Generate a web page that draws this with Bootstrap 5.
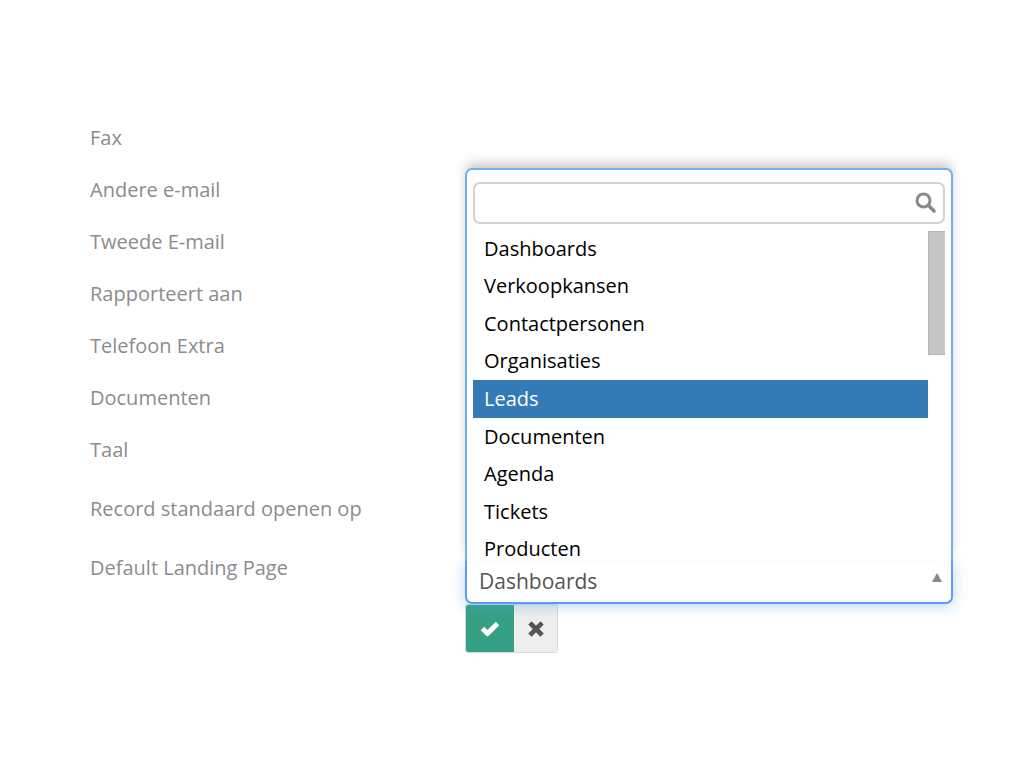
<!DOCTYPE html>
<html lang="nl">
<head>
<meta charset="utf-8">
<meta name="viewport" content="width=device-width, initial-scale=1">
<title>Voorkeuren</title>
<link href="https://cdn.jsdelivr.net/npm/bootstrap@5.3.0/dist/css/bootstrap.min.css" rel="stylesheet">
<style>
body { font-family: "Open Sans", "Noto Sans", sans-serif; font-size: 20px; line-height: 28px; background: #fff; }
.prefs { padding: 112px 71px 0 90px; }
.pref-row { display: grid; grid-template-columns: 375fr 488fr; }
.pref-label { color: #8c8c8c; padding: 12px 0; }
.pref-row.tall .pref-label { padding-top: 19px; }
.combo-cell { padding-top: 26px; }
.combo-value { height: 43px; border: 2px solid #5c9cf8; border-top: 0; border-radius: 0 0 7px 7px; padding: 0 10px 2px 12px; font-size: 21px; color: #555; appearance: none; background: #fff; box-shadow: 0 2px 14px rgba(82, 168, 236, .45); }
.combo-arrow { right: 11px; top: 12px; width: 10px; height: 9px; pointer-events: none; }
.combo-panel { bottom: 100%; left: 0; right: 0; padding: 12px 6px 0; border: 2px solid #6db2ef; border-bottom: 0; border-radius: 7px 7px 0 0; background: #fff; box-shadow: 0 -6px 12px -2px rgba(0, 0, 0, .24); }
.combo-search { height: 42px; border: 2px solid #d2d2d2; border-radius: 7px; padding: 0 44px 0 10px; font-size: 20px; }
.combo-search-icon { right: 8px; top: 10px; width: 22px; height: 22px; pointer-events: none; }
.combo-body { height: 330px; margin-top: 7px; overflow: hidden; }
.combo-list { height: 338px; margin-top: -1px; }
.combo-option { border: 0; background: none; color: #000; text-align: left; padding: 0 11px; line-height: 34px; }
.combo-option.active { background: #337ab7; color: #fff; }
.scroll-thumb { width: 17px; height: 124px; background: #c5c5c5; border: 1px solid #b5b5b5; border-right: 0; }
.confirm { border: 1px solid #d6d6d6; border-radius: 3px; overflow: hidden; height: 49px; }
.confirm button { border: 0; background: #eee; }
.confirm .save { width: 48px; background: #35a083; }
.confirm .cancel { width: 43px; }
</style>
</head>
<body>
<main class="container-fluid prefs">
  <form>
    <div class="pref-row"><div class="pref-label">Fax</div></div>
    <div class="pref-row"><div class="pref-label">Andere e-mail</div></div>
    <div class="pref-row"><div class="pref-label">Tweede E-mail</div></div>
    <div class="pref-row"><div class="pref-label">Rapporteert aan</div></div>
    <div class="pref-row"><div class="pref-label">Telefoon Extra</div></div>
    <div class="pref-row"><div class="pref-label">Documenten</div></div>
    <div class="pref-row"><div class="pref-label">Taal</div></div>
    <div class="pref-row tall"><div class="pref-label">Record standaard openen op</div></div>
    <div class="pref-row tall">
      <label class="pref-label" for="landing">Default Landing Page</label>
      <div class="combo-cell">
        <div class="position-relative">
          <select id="landing" class="combo-value w-100 d-block"><option>Dashboards</option></select>
          <svg class="combo-arrow position-absolute" viewBox="0 0 10 9" aria-hidden="true"><path d="M5 0 10 9H0z" fill="#888"/></svg>
          <div class="combo-panel position-absolute">
            <div class="position-relative">
              <input type="text" class="combo-search w-100 d-block" aria-label="Zoeken">
              <svg class="combo-search-icon position-absolute" viewBox="0 0 22 22" fill="none" stroke="#8a8a8a" aria-hidden="true"><circle cx="8.500" cy="8.500" r="6.500" stroke-width="3"/><path d="m13.500 13.500 5.500 5.500" stroke-width="3.600" stroke-linecap="round"/></svg>
            </div>
            <div class="combo-body d-flex align-items-start">
              <div class="combo-list d-flex flex-column flex-grow-1" role="listbox" aria-label="Default Landing Page">
                <button type="button" role="option" class="combo-option flex-fill">Dashboards</button>
                <button type="button" role="option" class="combo-option flex-fill">Verkoopkansen</button>
                <button type="button" role="option" class="combo-option flex-fill">Contactpersonen</button>
                <button type="button" role="option" class="combo-option flex-fill">Organisaties</button>
                <button type="button" role="option" aria-selected="true" class="combo-option flex-fill active">Leads</button>
                <button type="button" role="option" class="combo-option flex-fill">Documenten</button>
                <button type="button" role="option" class="combo-option flex-fill">Agenda</button>
                <button type="button" role="option" class="combo-option flex-fill">Tickets</button>
                <button type="button" role="option" class="combo-option flex-fill">Producten</button>
              </div>
              <div class="scroll-thumb"></div>
            </div>
          </div>
        </div>
        <div class="confirm d-inline-flex">
          <button type="button" class="save d-flex align-items-center justify-content-center p-0" aria-label="Opslaan"><svg width="20" height="16" viewBox="0 0 20 16" aria-hidden="true"><path d="M2.500 7.500 7.500 12.500 17.500 2.500" fill="none" stroke="#fff" stroke-width="5" stroke-linejoin="round"/></svg></button>
          <button type="button" class="cancel d-flex align-items-center justify-content-center p-0" aria-label="Annuleren"><svg width="16" height="16" viewBox="0 0 16 16" aria-hidden="true"><path d="m3.500 3.500 9 9M12.500 3.500l-9 9" stroke="#555" stroke-width="4.600" stroke-linecap="square"/></svg></button>
        </div>
      </div>
    </div>
  </form>
</main>
<script src="https://cdn.jsdelivr.net/npm/bootstrap@5.3.0/dist/js/bootstrap.bundle.min.js"></script>
</body>
</html>
